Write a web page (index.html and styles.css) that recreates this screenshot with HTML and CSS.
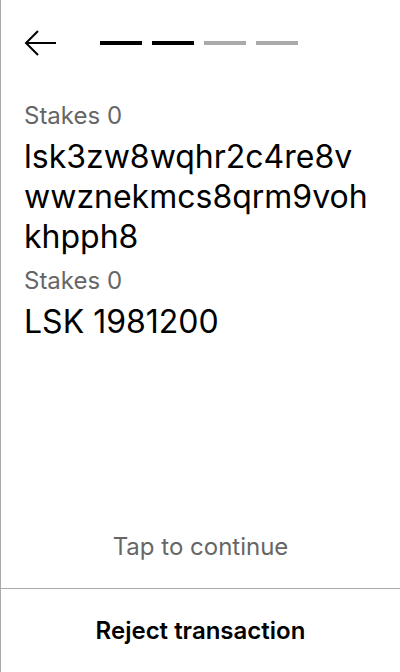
FILE: index.html
```html
<!DOCTYPE html>
<html>
<head>
<meta charset="utf-8">
<link rel="stylesheet" href="styles.css">
</head>
<body>
<div class="screen">
  <header class="top">
    <button class="back" aria-label="Back">
      <svg width="32" height="28" viewBox="0 0 32 28"><path d="M32 13H2M14 1L2 13l12 12" fill="none" stroke="#000" stroke-width="2"/></svg>
    </button>
    <div class="steps">
      <span class="step done"></span>
      <span class="step done"></span>
      <span class="step"></span>
      <span class="step"></span>
    </div>
  </header>
  <main class="content">
    <div class="label">Stakes 0</div>
    <div class="value address">lsk3zw8wqhr2c4re8vwwznekmcs8qrm9vohkhpph8</div>
    <div class="label">Stakes 0</div>
    <div class="value">LSK 1981200</div>
  </main>
  <div class="tap">Tap to continue</div>
  <footer class="reject">Reject transaction</footer>
</div>
</body>
</html>
```
FILE: styles.css
```css
* { box-sizing: border-box; }
html, body { margin: 0; padding: 0; background: #fff; }
body { font-family: Inter, "Noto Sans", sans-serif; color: #000; }
.screen {
  width: 400px;
  height: 672px;
  border-left: 1px solid #aaa;
  display: flex;
  flex-direction: column;
}
.top {
  display: flex;
  align-items: center;
  padding: 30px 0 0 23px;
  height: 57px;
}
.back {
  border: 0; background: none; padding: 0; margin: 0;
  width: 32px; height: 28px; display: block;
}
.back svg { display: block; }
.steps {
  display: flex;
  gap: 10px;
  margin-left: 44px;
  margin-top: -2px;
}
.step { width: 42px; height: 4px; background: #aaa; }
.step.done { background: #000; }
.content {
  padding: 43px 23px 0 23px;
  flex: 1;
}
.label {
  font-size: 24px;
  line-height: 32px;
  color: #666;
  margin-bottom: 5px;
}
.value {
  font-size: 32px;
  line-height: 40px;
  margin-bottom: 8px;
}
.address {
  width: 352px;
  word-break: break-all;
}
.tap {
  text-align: center;
  font-size: 24px;
  color: #666;
  line-height: 30px;
  padding-bottom: 26px;
}
.reject {
  border-top: 1px solid #aaa;
  height: 84px;
  display: flex;
  align-items: center;
  justify-content: center;
  font-size: 24px;
  font-weight: 600;
}
```
